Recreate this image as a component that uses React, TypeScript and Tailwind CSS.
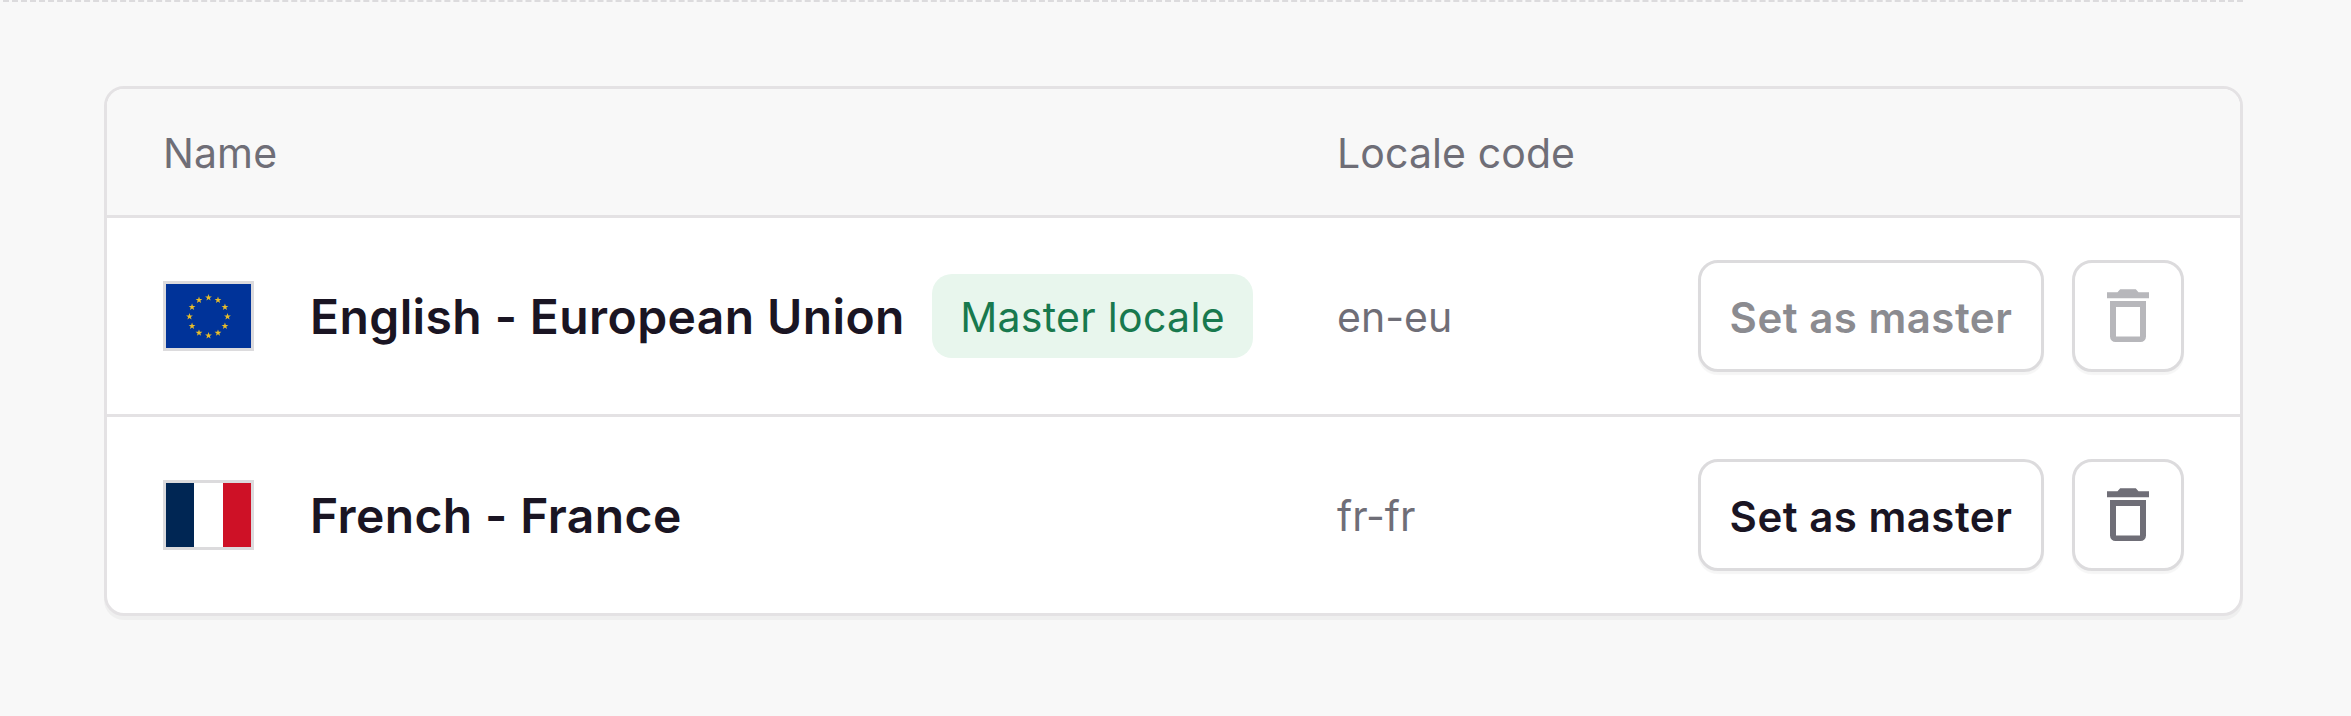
import React from 'react';

interface Locale {
  code: string;
  label: string;
  isMaster: boolean;
  Flag: React.FC;
}

const STAR = 'M0,-3.5 L0.85,-1.1 L3.4,-1.1 L1.35,0.45 L2.1,2.9 L0,1.4 L-2.1,2.9 L-1.35,0.45 L-3.4,-1.1 L-0.85,-1.1 Z';

const FlagEu: React.FC = () => (
  <svg viewBox="0 0 85 64" className="block w-full h-full">
    <rect width="85" height="64" fill="#003399" />
    {Array.from({ length: 12 }, (_, i) => {
      const angle = (i * Math.PI) / 6;
      const x = 42.5 + 19 * Math.sin(angle);
      const y = 32.5 - 19 * Math.cos(angle);
      return <path key={i} d={STAR} fill="#e8bd2a" transform={`translate(${x} ${y})`} />;
    })}
  </svg>
);

const FlagFr: React.FC = () => (
  <div className="flex w-full h-full">
    <div className="flex-1 bg-[#002654]" />
    <div className="flex-1 bg-white" />
    <div className="flex-1 bg-[#ce1126]" />
  </div>
);

const TrashIcon: React.FC = () => (
  <svg viewBox="0 0 56 56" className="w-14 h-14" fill="currentColor">
    <path d="M7 4.2h10.5L20.2 1.3h15.6L38.5 4.2H49v6H7z" />
    <path
      fillRule="evenodd"
      d="M10 13h36v35.5a5.5 5.5 0 0 1-5.5 5.5h-25a5.5 5.5 0 0 1-5.5-5.5zM16 19v29.5h24V19z"
    />
  </svg>
);

const locales: Locale[] = [
  { code: 'en-eu', label: 'English - European Union', isMaster: true, Flag: FlagEu },
  { code: 'fr-fr', label: 'French - France', isMaster: false, Flag: FlagFr },
];

const LocaleRow: React.FC<{ locale: Locale }> = ({ locale }) => {
  const { code, label, isMaster, Flag } = locale;

  return (
    <div className="flex items-center h-[199px] px-14 border-t-3 border-[#e4e2e4]">
      <div className="flex items-center w-[1174px]">
        <div className="w-[91px] h-[70px] mr-14 border-3 border-[#dcdbdd]">
          <Flag />
        </div>
        <span className="pt-[2px] text-[48px] leading-[70px] tracking-[0.4px] font-semibold text-[#1a1523] whitespace-nowrap">
          {label}
        </span>
        {isMaster && (
          <span className="ml-auto mr-[84px] flex items-center justify-center w-[321px] h-[84px] pt-[3px] rounded-[20px] bg-[#e8f6ed] text-[41px] tracking-[0.3px] text-[#18794e] whitespace-nowrap">
            Master locale
          </span>
        )}
      </div>
      <span className="pt-[3px] text-[41px] text-[#6f6e77]">{code}</span>
      <div className="flex gap-7 ml-auto">
        <button
          disabled={isMaster}
          className="w-[346px] h-28 pt-[3px] rounded-[20px] border-3 border-[#dcdbdd] bg-white shadow-[0_3px_1px_rgba(0,0,0,0.04)] text-[42px] tracking-[0.5px] font-semibold text-[#1a1523] disabled:text-[#8b8b90] whitespace-nowrap"
        >
          Set as master
        </button>
        <button
          disabled={isMaster}
          aria-label={`Delete ${label}`}
          className="flex items-center justify-center w-28 h-28 rounded-[20px] border-3 border-[#dcdbdd] bg-white shadow-[0_3px_1px_rgba(0,0,0,0.04)] text-[#6f6e77] disabled:text-[#b7b7bb]"
        >
          <TrashIcon />
        </button>
      </div>
    </div>
  );
};

export default function App() {
  return (
    <div className="w-[2351px] h-[716px] overflow-hidden bg-[#f8f8f8] font-[Inter,sans-serif]">
      <div className="-mt-px ml-[3px] w-[2240px] border-t-3 border-dashed border-[#dcdbdd]" />
      <div className="mt-[84px] ml-[104px] w-[2139px] overflow-hidden rounded-[20px] border-3 border-[#e4e2e4] bg-white shadow-[0_4px_0_rgba(0,0,0,0.035)]">
        <div className="flex items-center h-[126px] pl-14 pt-[4px] bg-[#f8f8f8] text-[41px] tracking-[0.1px] text-[#6f6e77]">
          <span className="w-[1174px]">Name</span>
          <span>Locale code</span>
        </div>
        {locales.map((locale) => (
          <LocaleRow key={locale.code} locale={locale} />
        ))}
      </div>
    </div>
  );
}
